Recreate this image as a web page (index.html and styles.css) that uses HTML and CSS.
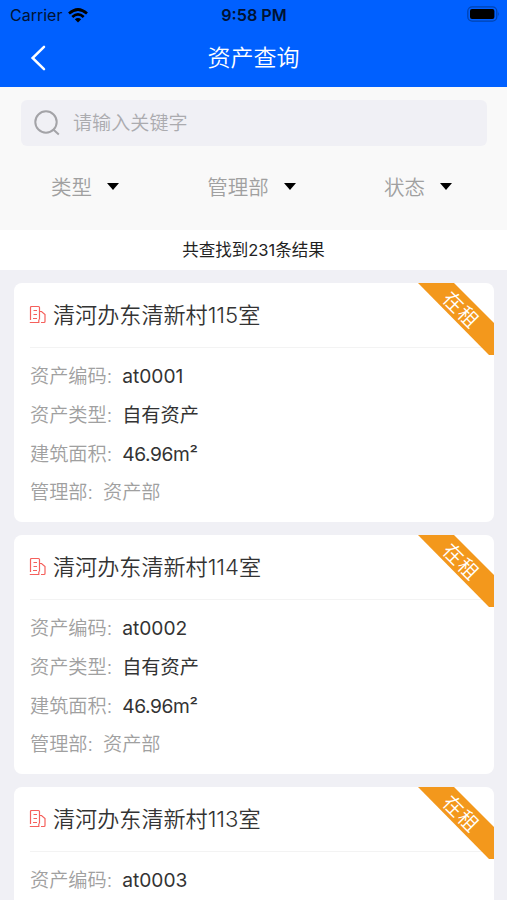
FILE: index.html
```
<!DOCTYPE html>
<html lang="zh-CN">
<head>
<meta charset="utf-8">
<title>资产查询</title>
<link rel="stylesheet" href="styles.css">
</head>
<body>
<svg width="0" height="0" class="defs" aria-hidden="true">
  <symbol id="building" viewBox="0 0 18 20">
    <path d="M1.5 15V2.5Q1.5 1.5 2.5 1.5H9.5Q10.5 1.5 10.5 2.5V14.5M.8 17.5H9.8V14.5M10.5 6.5H12.5L16 9.5V16.5Q16 17.5 15 17.5H12M4.5 5.5H8M4.5 9.5H8M4 13.5H8" fill="none" stroke="currentColor" stroke-width="1.2"/>
  </symbol>
  <symbol id="ribbon" viewBox="0 0 76 72">
    <path d="M0 0H36L76 40V72H71Z" fill="#f3981c"/>
  </symbol>
</svg>
<header class="top">
  <div class="status">
    <div class="carrier"><span>Carrier</span>
      <svg width="20" height="15" viewBox="0 0 20 15"><g fill="none" stroke="#000" stroke-width="2.7"><path d="M1 5.6Q10 -2.6 19 5.6"/><path d="M4.3 9Q10 3.8 15.7 9"/></g><path d="M6.8 11.2Q10 8.6 13.2 11.2L10 14.4Z"/></svg>
    </div>
    <div class="time">9:58 PM</div>
    <svg class="battery" width="33" height="16" viewBox="0 0 33 16"><rect x=".8" y=".8" width="29" height="14.4" rx="4.4" fill="none" stroke="#0043b0" stroke-width="1.3"/><rect x="3" y="3" width="24.4" height="10" rx="2" fill="#000"/><path d="M31.3 5.5Q33 8 31.3 10.5Z" fill="#0043b0"/></svg>
  </div>
  <div class="nav">
    <svg class="back" width="16" height="26" viewBox="0 0 16 26"><path d="M14 1.8L2.6 13L14 24.2" fill="none" stroke="#fff" stroke-width="2.5" stroke-linecap="round"/></svg>
    <h1>资产查询</h1>
  </div>
</header>
<section class="query">
  <div class="search">
    <svg width="26" height="26" viewBox="0 0 26 26"><g fill="none" stroke="#a3a3a7" stroke-width="2"><circle cx="12" cy="12" r="10.7"/><path d="M19 19.2L24.8 24.4"/></g></svg>
    <span>请输入关键字</span>
  </div>
  <div class="filters">
    <div class="filter"><span>类型</span><i></i></div>
    <div class="filter"><span>管理部</span><i></i></div>
    <div class="filter"><span>状态</span><i></i></div>
  </div>
</section>
<div class="count">共查找到231条结果</div>
<main>
  <article class="card">
    <h2><svg width="18" height="20"><use href="#building"/></svg><span>清河办东清新村115室</span></h2>
    <dl>
      <div><dt>资产编码:</dt><dd>at0001</dd></div>
      <div><dt>资产类型:</dt><dd>自有资产</dd></div>
      <div><dt>建筑面积:</dt><dd class="area">46.96m²</dd></div>
      <div><dt>管理部:</dt><dd class="muted">资产部</dd></div>
    </dl>
    <div class="badge"><svg width="76" height="72"><use href="#ribbon"/></svg><span>在租</span></div>
  </article>
  <article class="card">
    <h2><svg width="18" height="20"><use href="#building"/></svg><span>清河办东清新村114室</span></h2>
    <dl>
      <div><dt>资产编码:</dt><dd>at0002</dd></div>
      <div><dt>资产类型:</dt><dd>自有资产</dd></div>
      <div><dt>建筑面积:</dt><dd class="area">46.96m²</dd></div>
      <div><dt>管理部:</dt><dd class="muted">资产部</dd></div>
    </dl>
    <div class="badge"><svg width="76" height="72"><use href="#ribbon"/></svg><span>在租</span></div>
  </article>
  <article class="card partial">
    <h2><svg width="18" height="20"><use href="#building"/></svg><span>清河办东清新村113室</span></h2>
    <dl>
      <div><dt>资产编码:</dt><dd>at0003</dd></div>
    </dl>
    <div class="badge"><svg width="76" height="72"><use href="#ribbon"/></svg><span>在租</span></div>
  </article>
</main>
</body>
</html>
```
FILE: styles.css
```
* { box-sizing: border-box; margin: 0; padding: 0; }
body {
  height: 900px;
  overflow: hidden;
  background: #f0f0f5;
  font-family: Inter, "Noto Sans CJK SC", sans-serif;
  color: #333;
}
.defs { display: block; position: absolute; }
.top { height: 87px; background: #0060ff; }
.status {
  height: 30px;
  padding: 0 7px 0 10px;
  display: grid;
  grid-template-columns: 1fr auto 1fr;
  align-items: center;
  color: #001333;
  font-size: 16px;
}
.carrier { display: flex; align-items: center; gap: 6px; }
.time { font-weight: 600; font-size: 16.2px; margin-right: 2px; }
.battery { justify-self: end; margin-top: -2px; }
.nav {
  height: 56px;
  display: grid;
  grid-template-columns: 1fr auto 1fr;
  align-items: center;
}
.back { margin-left: 30px; }
.nav h1 { color: #fff; font-size: 23px; font-weight: 350; line-height: 30px; }
.query { height: 143px; padding: 13px 20px 0 21px; background: #f9f9f9; }
.search {
  height: 46px;
  padding-left: 13px;
  display: flex;
  align-items: center;
  gap: 13px;
  border-radius: 6px;
  background: #f0f0f5;
  color: #ababaf;
  font-size: 19.1px;
  font-weight: 350;
}
.search span { padding-bottom: 2px; }
.filters {
  height: 80px;
  padding: 0 35px 0 30px;
  display: flex;
  align-items: center;
  justify-content: space-between;
  color: #a0a0a0;
  font-size: 20.5px;
  font-weight: 350;
}
.filter { display: flex; align-items: center; gap: 15px; }
.filter span { padding-bottom: 1px; }
.filter i {
  border: 6px solid transparent;
  border-top: 7px solid #000;
  border-bottom: 0;
}
.count {
  height: 40px;
  background: #fff;
  text-align: center;
  line-height: 41px;
  font-size: 16.5px;
  color: #222;
}
main { padding: 13px 13px 0 14px; display: flex; flex-direction: column; gap: 13px; }
.card {
  position: relative;
  height: 239px;
  padding: 0 0 0 16px;
  background: #fff;
  border-radius: 8px;
  overflow: hidden;
}
.card.partial { height: 113px; border-radius: 8px 8px 0 0; }
.card h2 {
  height: 65px;
  display: flex;
  align-items: center;
  gap: 6px;
  border-bottom: 1px solid #f3f3f3;
  font-size: 22.1px;
  font-weight: 350;
}
.card h2 svg { color: #f5605c; margin-left: -1px; }
.card h2 span { padding-bottom: 4px; }
dl { padding-top: 9px; }
dl div { height: 38.8px; display: flex; align-items: baseline; gap: 10px; font-size: 19.2px; line-height: 38.8px; }
dt, .muted { color: #a0a0a0; font-weight: 350; }
.area { letter-spacing: -.4px; }
.badge { position: absolute; top: 0; right: 0; width: 76px; height: 72px; }
.badge svg { display: block; }
.badge span {
  position: absolute;
  left: 17px;
  top: 13px;
  width: 52px;
  line-height: 28px;
  text-align: center;
  color: #fff;
  font-size: 20px;
  letter-spacing: 1px;
  font-weight: 350;
  transform: rotate(45deg);
}
```
